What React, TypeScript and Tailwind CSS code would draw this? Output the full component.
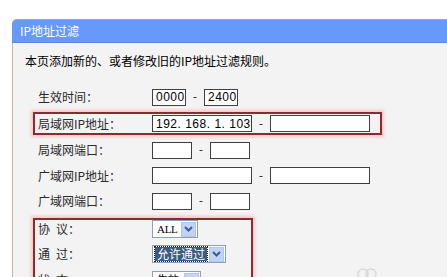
import React from "react";

// IP地址过滤 - 规则编辑页面（旧式路由器管理界面）

const FONT = { fontFamily: '"SimSun", "Noto Sans CJK SC", "Liberation Sans", sans-serif' };

function TextBox({ w, value }: { w: string; value?: string }) {
  return (
    <div
      className={`${w} h-[17px] bg-white border border-[#3f3f3f] flex items-center pl-[3px] text-[12px] text-black tracking-[0.5px]`}
      style={{ fontFamily: '"Liberation Sans", Arial, sans-serif' }}
    >
      {value}
    </div>
  );
}

function Dash() {
  return <span className="w-[18px] text-center text-[12px] text-[#333]">-</span>;
}

function Arrow() {
  return (
    <div className="w-[15px] h-[15px] shrink-0 bg-[#c3d3f7] border border-[#b3c6ef] flex items-center justify-center">
      <svg width="9" height="6" viewBox="0 0 9 6">
        <path d="M1 1 L4.5 4.5 L8 1" stroke="#3b5a9e" strokeWidth="2" fill="none" />
      </svg>
    </div>
  );
}

function Select({ w, value, selected }: { w: string; value: string; selected?: boolean }) {
  return (
    <div className={`${w} h-[18px] bg-white border border-[#8f9fb5] flex items-center justify-between pl-[2px] pr-[1px]`}>
      <span
        className={
          selected
            ? "bg-[#3d5a82] text-white text-[12px] leading-[14px] px-[2px] outline outline-1 outline-dotted outline-[#222]"
            : "text-[11px] leading-[14px] text-black pl-[2px] tracking-[-0.3px]"
        }
        style={selected ? FONT : { fontFamily: '"Liberation Serif", "Noto Sans CJK SC", serif' }}
      >
        {value}
      </span>
      <Arrow />
    </div>
  );
}

function Row({ label, children, h = "h-[26px]" }: { label: string; children: React.ReactNode; h?: string }) {
  return (
    <div className={`flex items-center ${h}`}>
      <div className="w-[114px] text-[12px] text-[#2a2a2a] whitespace-pre" style={FONT}>
        {label}
      </div>
      <div className="flex items-center">{children}</div>
    </div>
  );
}

export default function App() {
  return (
    <div className="w-[447px] h-[277px] overflow-hidden bg-white relative">
      <div className="pt-[19px] pl-[12px]">
        <div className="w-[450px]">
          {/* 标题栏 */}
          <div className="h-[24px] rounded-tl-[5px] bg-[#6699fa] border-t border-[#9aa6bb] border-b border-b-[#5c88dc] flex items-center pl-[8px]">
            <span className="text-white text-[12px]" style={FONT}>
              IP地址过滤
            </span>
          </div>

          {/* 内容区 */}
          <div className="bg-[#f3f3f3] border-l border-[#c7b39c] h-[240px] pt-[10px]">
            <p className="pl-[12px] text-[12px] leading-[16px] text-black mb-[15px]" style={FONT}>
              本页添加新的、或者修改旧的IP地址过滤规则。
            </p>

            <div className="pl-[20px]">
              <div className="pl-[5px]">
                <Row label="生效时间：">
                  <TextBox w="w-[34px]" value="0000" />
                  <Dash />
                  <TextBox w="w-[34px]" value="2400" />
                </Row>
              </div>

              <div className="mt-[2px] w-[349px] h-[23px] border-2 border-[#8c2a30] shadow-[0_0_3px_2px_rgba(255,160,160,0.55)] pl-[3px] flex items-center">
                <Row label="局域网IP地址：" h="h-[19px]">
                  <TextBox w="w-[100px]" value="192. 168. 1. 103" />
                  <Dash />
                  <TextBox w="w-[100px]" />
                </Row>
              </div>

              <div className="pl-[5px] mt-[2px]">
                <Row label="局域网端口：">
                  <TextBox w="w-[40px]" />
                  <Dash />
                  <TextBox w="w-[40px]" />
                </Row>
                <Row label="广域网IP地址：" h="h-[25px]">
                  <TextBox w="w-[100px]" />
                  <Dash />
                  <TextBox w="w-[100px]" />
                </Row>
                <Row label="广域网端口：">
                  <TextBox w="w-[40px]" />
                  <Dash />
                  <TextBox w="w-[40px]" />
                </Row>
              </div>

              <div className="mt-[4px] w-[220px] h-[80px] border-2 border-b-0 border-[#8c2a30] shadow-[0_0_3px_2px_rgba(255,160,160,0.55)] pl-[3px]">
                <Row label={"协\u2002议："} h="h-[18px]">
                  <Select w="w-[46px]" value="ALL" />
                </Row>
                <div className="mt-[3px]">
                  <Row label={"通\u2002过："}>
                    <Select w="w-[74px]" value="允许通过" selected />
                  </Row>
                  <Row label={"状\u2002态："}>
                    <Select w="w-[49px]" value="生效" />
                  </Row>
                </div>
              </div>
            </div>
          </div>
        </div>
      </div>

      {/* 角落水印 */}
      <svg className="absolute left-[356px] top-[266px]" width="22" height="14" viewBox="0 0 22 14">
        <circle cx="7" cy="8" r="5" stroke="#d8d8d8" strokeWidth="1.5" fill="none" />
        <circle cx="15" cy="8" r="5" stroke="#d8d8d8" strokeWidth="1.5" fill="none" />
      </svg>
    </div>
  );
}
